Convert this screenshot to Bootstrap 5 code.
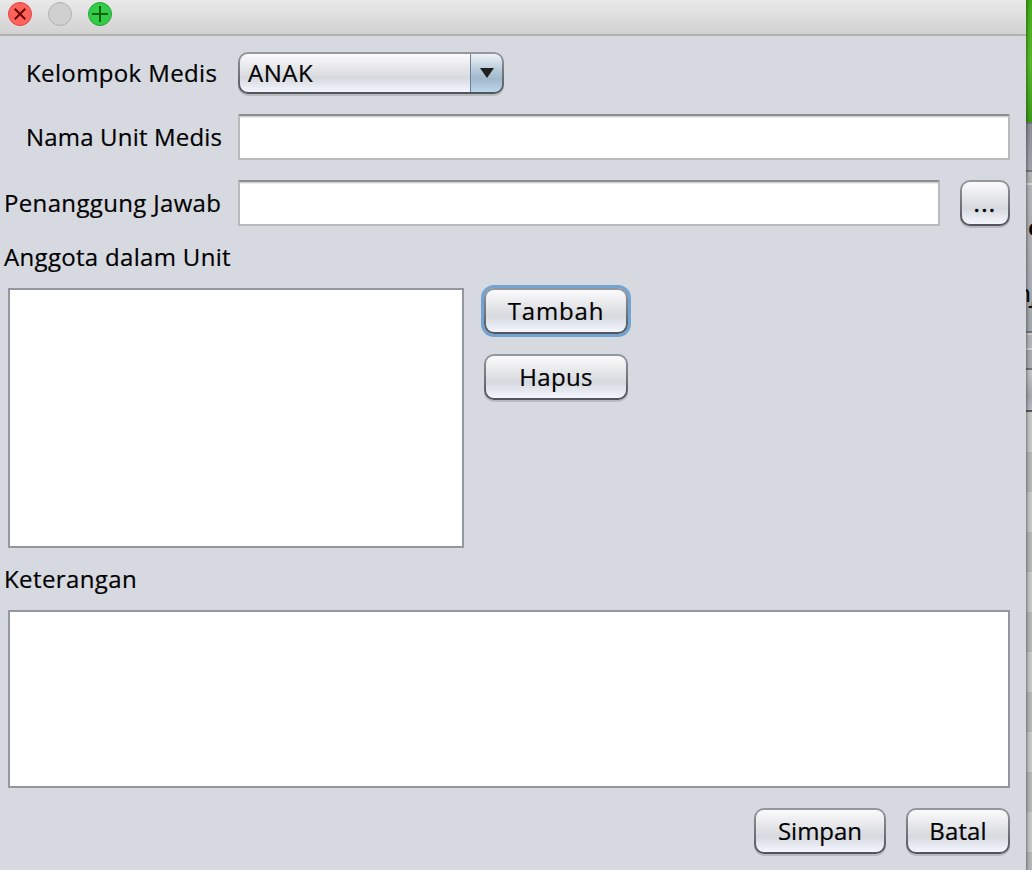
<!DOCTYPE html>
<html lang="id">
<head>
<meta charset="utf-8">
<meta name="viewport" content="width=device-width, initial-scale=1">
<title>Unit Medis</title>
<link href="https://cdn.jsdelivr.net/npm/bootstrap@5.3.0/dist/css/bootstrap.min.css" rel="stylesheet">
<style>
body{width:1032px;height:870px;overflow:hidden;background:#b8b8b8;font-family:"Open Sans","Noto Sans",sans-serif;font-size:24px;line-height:30px;color:#000;-webkit-text-stroke:.2px #000}
.dialog{width:1026px;height:870px;background:#d6d9df}
.titlebar{height:36px;padding:2px 0 0 8px;gap:16px;background:linear-gradient(#e9e9e9,#d2d2d2);border-bottom:2px solid #b1b1b1}
.titlebar svg{width:24px;height:24px;display:block}
.content{padding:16px 16px 16px 8px}
.lbl{white-space:nowrap;width:230px;flex:none}
.in{padding-left:18px}
.out{margin-left:-4px;width:234px}
.field{height:46px;border:2px solid #b9babc;border-top-color:#8d8e90;border-radius:0;background:#fff;box-shadow:inset 0 1px 0 #cfcfcf,inset 0 2px 0 #ececec;padding:0 6px;font-size:24px;min-width:0}
.area{border:2px solid #9297a1;border-radius:0;background:#fff;resize:none;padding:4px}
.nb{height:46px;padding:0;border:2px solid transparent;border-radius:10px;font-size:24px;line-height:42px;color:#000;white-space:nowrap;
background:linear-gradient(#fbfbfc,#e4e5e8 40%,#d6d9df 63%,#f3f6fd) padding-box,linear-gradient(#95989e,#50545b) border-box;box-shadow:0 2px 0 #b7babf}
.nb:hover{color:#000}
.focused{box-shadow:0 0 0 3px #73a4d1}
.combo{width:266px;height:42px;line-height:38px;text-align:left;display:flex;overflow:hidden}
.combo .val{padding-left:8px;width:230px}
.combo .arrow{width:34px;margin:-2px -2px -2px 0;border:solid #395063;border-width:2px 2px 2px 1px;border-color:#56718a #45657f #233c50 #67829a;border-radius:0 9px 9px 0;background:linear-gradient(#edf2f6,#b4c7d7 45%,#a2b9cc 65%,#bdd5eb);display:flex;align-items:center;justify-content:center}
.t1{letter-spacing:.37px}.t2{letter-spacing:.5px}.t3{letter-spacing:.18px}.t4{letter-spacing:.34px}
.t5{letter-spacing:1.4px;-webkit-text-stroke-width:.5px}
.t6{letter-spacing:.32px}.t7{letter-spacing:.85px}.t8{letter-spacing:.3px}.t9{letter-spacing:.4px}.t11{letter-spacing:.1px}
.behind{width:6px;height:870px;overflow:hidden;position:relative;background:linear-gradient(#42ad17,#57bb2b 7%,#3e9d18 14%)}
.behind .strip{width:6px}
.behind::after{content:"";position:absolute;inset:0;background:linear-gradient(90deg,rgba(0,0,0,.32),rgba(0,0,0,.04) 50%,transparent)}
.frag{position:absolute;font-size:24px;line-height:30px}
</style>
</head>
<body class="d-flex">
<main class="dialog flex-shrink-0">
  <header class="titlebar d-flex">
    <svg viewBox="0 0 24 24"><circle cx="12" cy="12" r="11.5" fill="#ff615b" stroke="#df4744"/><path d="M6.7 6.7 17.3 17.3M17.3 6.7 6.7 17.3" stroke="#690b08" stroke-width="2"/></svg>
    <svg viewBox="0 0 24 24"><circle cx="12" cy="12" r="11.5" fill="#d0d0d0" stroke="#b2b2b2"/></svg>
    <svg viewBox="0 0 24 24"><circle cx="12" cy="12" r="11.5" fill="#34cb48" stroke="#22a735"/><path d="M4 12H20M12 4V20" stroke="#0a6513" stroke-width="2"/></svg>
  </header>
  <form class="content d-flex flex-column">
    <div class="d-flex align-items-center" style="margin-bottom:20px">
      <div class="lbl in"><span class="t1">Kelompok Medis</span></div>
      <button type="button" class="btn nb combo"><span class="val t2">ANAK</span><span class="arrow"><svg width="14" height="10" viewBox="0 0 14 10"><path d="M0 0H14L7 10Z" fill="#202020"/></svg></span></button>
    </div>
    <div class="d-flex align-items-center" style="margin-bottom:20px">
      <div class="lbl in"><span class="t3">Nama Unit Medis</span></div>
      <input class="form-control field flex-fill" aria-label="Nama Unit Medis">
    </div>
    <div class="d-flex align-items-center">
      <div class="lbl out"><span class="t4">Penanggung Jawab</span></div>
      <input class="form-control field flex-fill" aria-label="Penanggung Jawab">
      <button type="button" class="btn nb flex-shrink-0 t5" style="width:50px;margin-left:20px">...</button>
    </div>
    <div class="lbl out d-flex align-items-center" style="height:62px"><span class="t6">Anggota dalam Unit</span></div>
    <div class="d-flex" style="height:260px">
      <div class="area" style="width:456px"></div>
      <div class="d-flex flex-column" style="width:144px;margin-left:20px;gap:20px">
        <button type="button" class="btn nb focused"><span class="t7">Tambah</span></button>
        <button type="button" class="btn nb"><span class="t8">Hapus</span></button>
      </div>
    </div>
    <div class="lbl out d-flex align-items-center" style="height:62px"><span class="t9">Keterangan</span></div>
    <textarea class="area d-block" style="height:178px" aria-label="Keterangan"></textarea>
    <div class="d-flex justify-content-end" style="gap:20px;margin-top:20px">
      <button type="button" class="btn nb" style="width:132px"><span class="t10">Simpan</span></button>
      <button type="button" class="btn nb" style="width:104px"><span class="t11">Batal</span></button>
    </div>
  </form>
</main>
<aside class="behind flex-shrink-0" aria-hidden="true">
  <div class="strip" style="height:122px"></div>
  <div class="strip" style="height:2px;background:#74787d"></div>
  <div class="strip" style="height:46px;background:linear-gradient(#8b9096,#a0a4aa)"></div>
  <div class="strip" style="height:2px;background:#757a81"></div>
  <div class="strip" style="height:11px;background:#b2b3b5"></div>
  <div class="strip" style="height:2px;background:#d5d5d5"></div>
  <div class="strip" style="height:146px;background:linear-gradient(#b3b5b9,#a3a8ae)"></div>
  <div class="strip" style="height:2px;background:#747679"></div>
  <div class="strip" style="height:2px;background:#c9c9c9"></div>
  <div class="strip" style="height:13px;background:#b4b5b7"></div>
  <div class="strip" style="height:2px;background:#d2d2d2"></div>
  <div class="strip" style="height:18px;background:#a8acb1"></div>
  <div class="strip" style="height:2px;background:#707378"></div>
  <div class="strip" style="height:40px;background:linear-gradient(#c5c6c8,#a5a8ad 65%,#b6bac2)"></div>
  <div class="strip" style="height:2px;background:#55585d"></div>
  <div class="strip" style="height:458px;background:repeating-linear-gradient(#c7c7c7 0 40px,#b7b7b7 40px 80px)"></div>
  <span class="frag fw-semibold" style="left:2px;top:212px">e</span>
  <span class="frag" style="right:1px;top:278px">n</span><span class="frag" style="left:4px;top:278px;clip-path:inset(24px 0 0 -4px)">j</span>
</aside>
<script src="https://cdn.jsdelivr.net/npm/bootstrap@5.3.0/dist/js/bootstrap.bundle.min.js"></script>
</body>
</html>
